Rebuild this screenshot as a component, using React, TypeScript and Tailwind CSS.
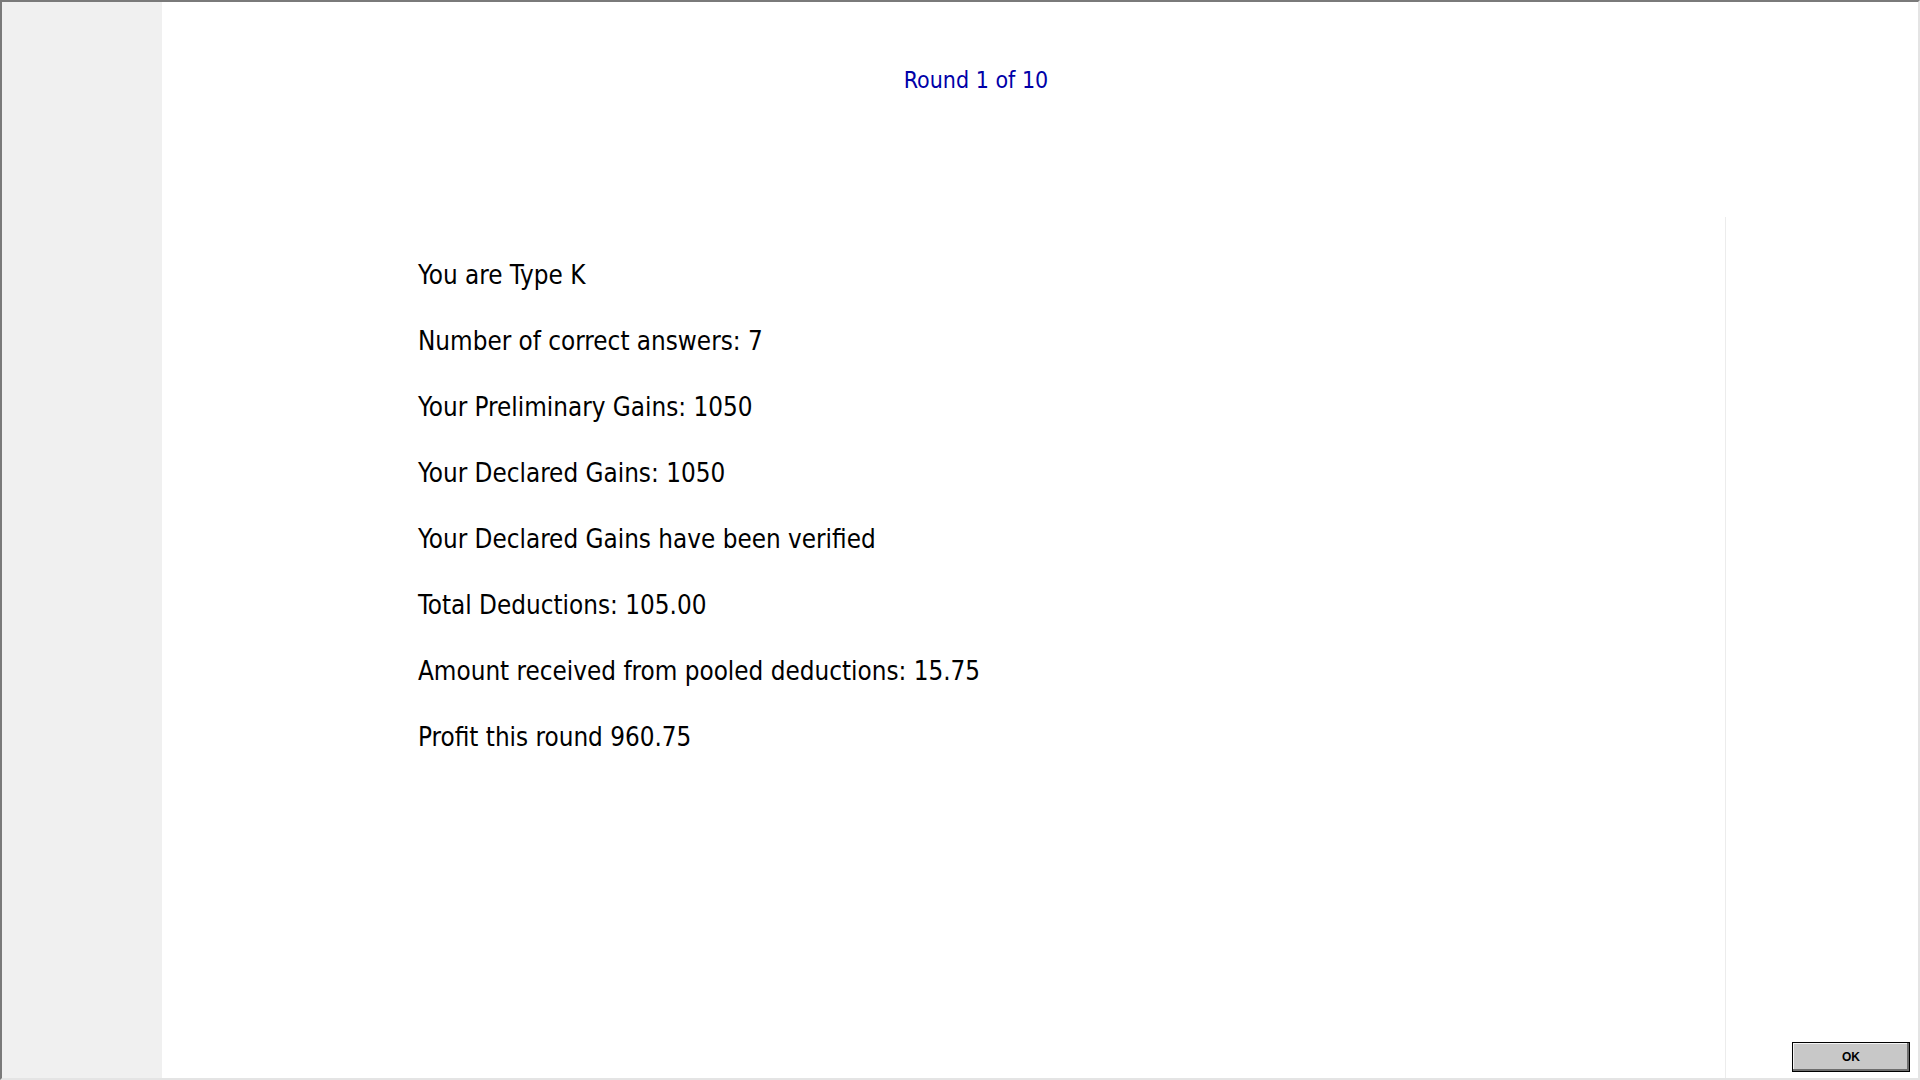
const lines = [
  "You are Type K",
  "Number of correct answers: 7",
  "Your Preliminary Gains: 1050",
  "Your Declared Gains: 1050",
  "Your Declared Gains have been verified",
  "Total Deductions: 105.00",
  "Amount received from pooled deductions: 15.75",
  "Profit this round 960.75",
];

export default function App() {
  return (
    <div
      className="h-screen w-full flex border-t-2 border-l-2 border-t-[#7a7a7a] border-l-[#7a7a7a] border-r-2 border-b-2 border-r-[#e4e4e4] border-b-[#e4e4e4] bg-white overflow-hidden"
      style={{ fontFamily: '"DejaVu Sans Condensed", "DejaVu Sans", sans-serif' }}
    >
      {/* Left gutter */}
      <div className="w-[160px] shrink-0 bg-[#f0f0f0]" />

      {/* Main */}
      <div className="flex-1 flex flex-col">
        <div className="h-[215px] shrink-0 pr-[128px] pt-[63px] text-center">
          <span className="text-[23px] leading-[30px] text-[#0000a8]">Round 1 of 10</span>
        </div>

        <div className="flex-1 flex">
          <div className="flex-1 border-r border-[#ececec] pl-[256px] pt-[41px]">
            {lines.map((line) => (
              <div key={line} className="h-[66px] text-[25.8px] leading-[34px] text-black">
                {line}
              </div>
            ))}
          </div>

          <div className="w-[192px] shrink-0 flex flex-col justify-end items-end pr-[8px] pb-[6px]">
            <button className="w-[118px] h-[30px] bg-[#c8c8c8] border border-black shadow-[inset_-2px_-2px_0_#6e6e6e,inset_1px_1px_0_#f4f4f4] text-[12px] font-bold text-black" style={{ fontFamily: '"Liberation Sans", Arial, sans-serif' }}>
              OK
            </button>
          </div>
        </div>
      </div>
    </div>
  );
}
